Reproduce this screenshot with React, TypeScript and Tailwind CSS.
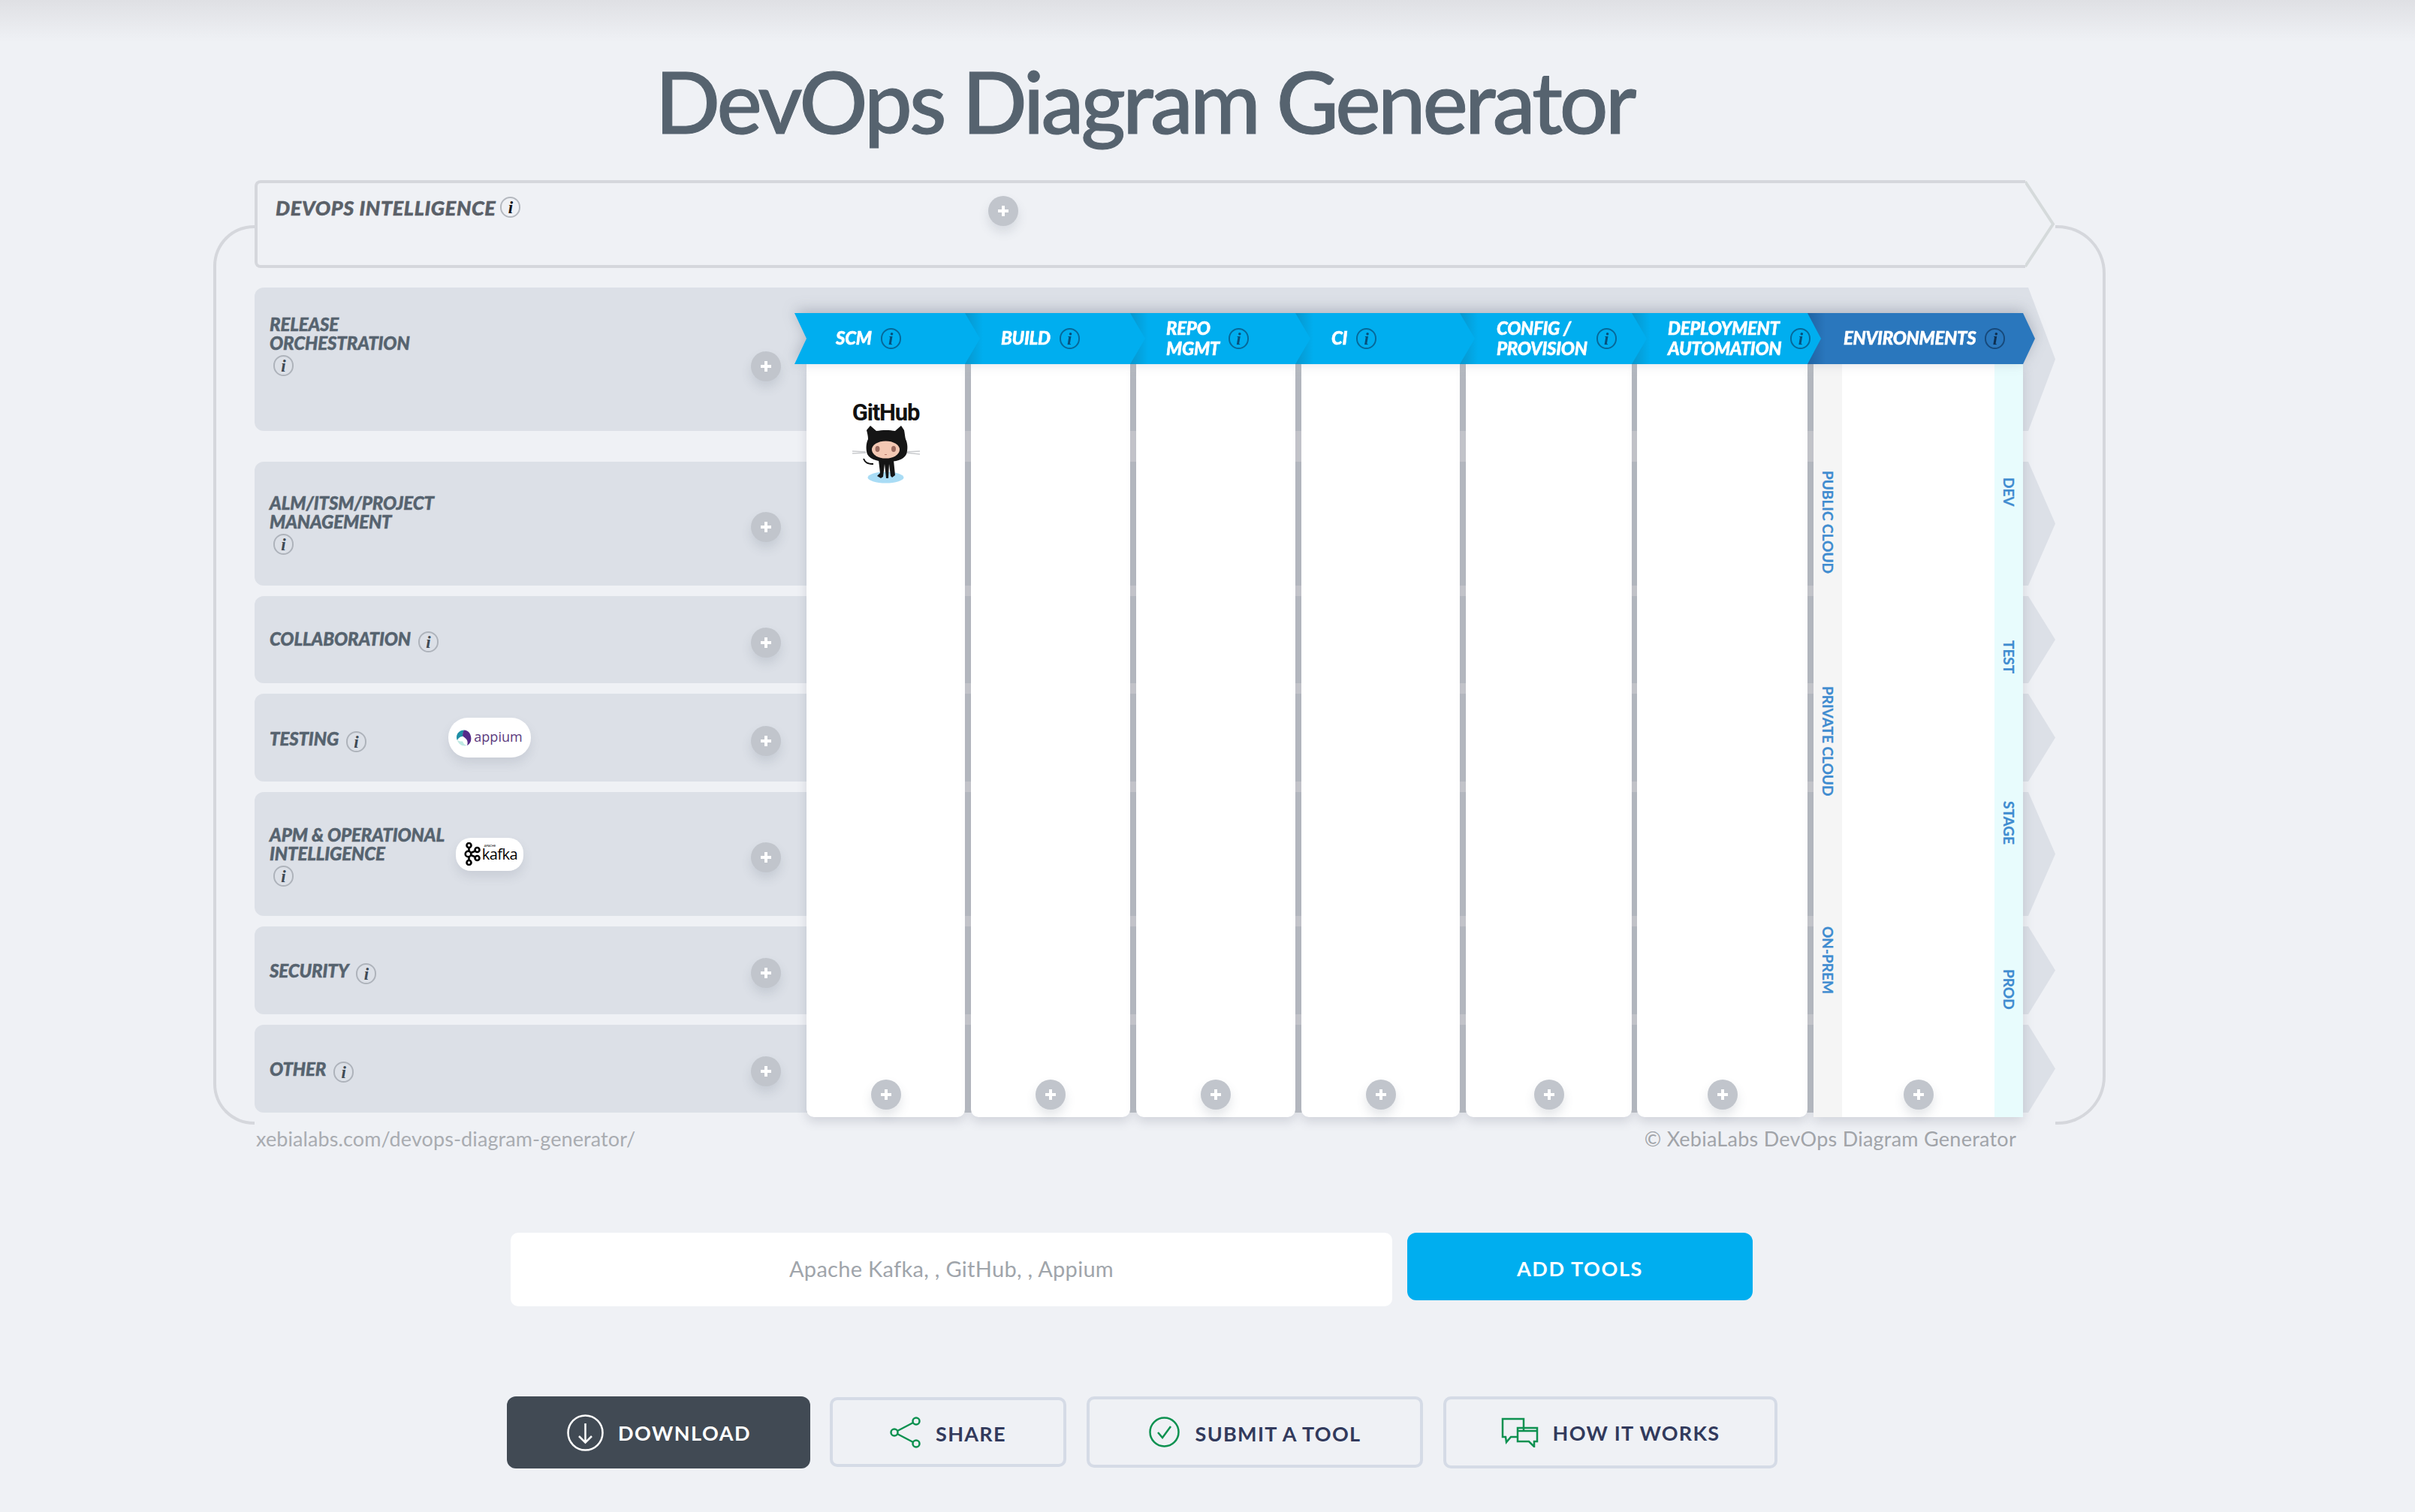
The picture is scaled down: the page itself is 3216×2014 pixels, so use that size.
import React from "react";

const InfoIcon = ({ tone = "gray", className = "" }: { tone?: "gray" | "blue" | "navy" | "dark"; className?: string }) => {
  const tones = {
    gray: "border-[#aeb3bb] text-[#3f4a54]",
    dark: "border-[#b4b8bf] text-[#0f1114]",
    blue: "border-[#06699a] text-[#06507c]",
    navy: "border-[#174a7c] text-[#0e2f50]",
  };
  return (
    <span
      className={`inline-flex h-[28px] w-[27px] shrink-0 items-center justify-center rounded-full border-2 [font-family:'Liberation_Serif',serif] text-[23px] font-bold italic leading-none ${tones[tone]} ${className}`}
    >
      i
    </span>
  );
};

const PlusButton = ({ className = "" }: { className?: string }) => (
  <button className={`flex h-[40px] w-[40px] shrink-0 items-center justify-center rounded-full bg-[#c1c5cc] shadow-[0_8px_14px_rgba(90,100,120,0.16)] ${className}`}>
    <svg width="14" height="14" viewBox="0 0 14 14" fill="#ffffff">
      <path d="M5 0h4v5h5v4H9v5H5V9H0V5h5z" />
    </svg>
  </button>
);

const AppiumLogo = () => (
  <div className="flex items-center gap-[3px] text-[#5b3a7e]">
    <svg width="20" height="22" viewBox="0 0 20 22">
      <path d="M10 0.500C4 0.500 0 5 0 10c0 1.500 .4 3 1 4 1-3 4-5 7-5 0-3 1-6 2-8.500z" fill="#1f8fa6" />
      <path d="M1 14c1 4 5 7.500 10 7.500 1 0 2-.2 3-.5-3-.5-5-2.500-6-5.500-3 0-5-.5-7-1.500z" fill="#bfe9e3" />
      <path d="M10 0.500c3 .2 5 1 7 3.500 2 3 3 7 2 11-1 3-3 5-5 6 1-3 1-6-1-8.500-2-2.500-5-3-5-5 0-3 1-5.500 2-7z" fill="#54298a" />
    </svg>
    <span className="[font-family:'Open_Sans',sans-serif] text-[18px] leading-none pb-[3px]">appium</span>
  </div>
);

const KafkaLogo = () => (
  <div className="flex items-center gap-[2px] pl-[3px] text-black">
    <svg width="22" height="31" viewBox="0 0 21 31" fill="none" stroke="#000" strokeWidth="2.600">
      <circle cx="6" cy="4" r="3" />
      <circle cx="5" cy="15.500" r="3.800" />
      <circle cx="6" cy="27" r="3" />
      <circle cx="17" cy="10" r="3" />
      <circle cx="17" cy="21" r="3" />
      <path d="M6 7v5M6 19v5M8.500 14l6-2.500M8.500 17l6 2.500" />
    </svg>
    <div className="flex flex-col">
      <span className="text-[4px] leading-[5px] pl-[3px]">APACHE</span>
      <span className="[font-family:'Open_Sans',sans-serif] text-[20px] leading-[18px] tracking-[-0.5px] pb-[4px]">kafka</span>
    </div>
  </div>
);

const Octocat = () => (
  <svg width="90" height="82" viewBox="0 0 90 80">
    <ellipse cx="44.500" cy="69" rx="24" ry="7.500" fill="#a9dcf5" />
    <path d="M0 34l18 1M0 37l18-1M71 35l19-1M71 36l19 2" stroke="#c9cbce" strokeWidth="1.300" />
    <path d="M15 44c2 5 5 7 13 7" stroke="#111" strokeWidth="2" fill="none" />
    <path d="M19 6l5-6 8 7c8-1.500 18-1.500 25 0l8-7 4 6c1 5 1 8 2 12 3 6 3 14 1 20-4 8-15 10-25 10S24 46 20 38c-2-6-2-14 1-20 0-4-1-8-2-12z" fill="#151515" />
    <path d="M35 46h20l2 20-4 3-2-2-2-16-1 19h-3l-2-19-2 17-3 2-5-3 4-4z" fill="#151515" />
    <ellipse cx="44.500" cy="32" rx="18.500" ry="11.500" fill="#f3c8b3" />
    <ellipse cx="33.500" cy="31" rx="3" ry="4" fill="#9a6a5e" />
    <ellipse cx="55" cy="31" rx="3" ry="4" fill="#9a6a5e" />
    <path d="M43 38.500h3" stroke="#b8796a" strokeWidth="1" />
  </svg>
);

const rows = [
  { lines: ["RELEASE", "ORCHESTRATION"], h: "h-[191px]", labelPad: "pt-[37px]", plusPad: "pt-[19px]", stacked: true },
  { lines: ["ALM/ITSM/PROJECT", "MANAGEMENT"], h: "h-[165px]", labelPad: "pt-[43px]", plusPad: "pt-[8px]", stacked: true },
  { lines: ["COLLABORATION"], h: "h-[116px]", labelPad: "pt-[45px]", plusPad: "pt-[7px]", stacked: false },
  { lines: ["TESTING"], h: "h-[117px]", labelPad: "pt-[48px]", plusPad: "pt-[8px]", stacked: false, logo: "appium" },
  { lines: ["APM & OPERATIONAL", "INTELLIGENCE"], h: "h-[165px]", labelPad: "pt-[45px]", plusPad: "pt-[8px]", stacked: true, logo: "kafka" },
  { lines: ["SECURITY"], h: "h-[117px]", labelPad: "pt-[47px]", plusPad: "pt-[7px]", stacked: false },
  { lines: ["OTHER"], h: "h-[117px]", labelPad: "pt-[47px]", plusPad: "pt-[7px]", stacked: false },
];

const columns = [
  { title: ["SCM"], head: "w-[247px] -mr-[20px] z-[7] pl-[55px] bg-[#00aeef] [clip-path:polygon(0_0,calc(100%_-_20px)_0,100%_50%,calc(100%_-_20px)_100%,0_100%,16px_50%)]", body: "w-[211px]" },
  { title: ["BUILD"], head: "w-[240px] -mr-[20px] z-[6] pl-[48px] bg-[linear-gradient(90deg,#0796cd,#00aeef_24px)] [clip-path:polygon(0_0,calc(100%_-_20px)_0,100%_50%,calc(100%_-_20px)_100%,0_100%)]", body: "w-[212px]" },
  { title: ["REPO", "MGMT"], head: "w-[240px] -mr-[20px] z-[5] pl-[48px] bg-[linear-gradient(90deg,#0796cd,#00aeef_24px)] [clip-path:polygon(0_0,calc(100%_-_20px)_0,100%_50%,calc(100%_-_20px)_100%,0_100%)]", body: "w-[212px]" },
  { title: ["CI"], head: "w-[239px] -mr-[20px] z-[4] pl-[48px] bg-[linear-gradient(90deg,#0796cd,#00aeef_24px)] [clip-path:polygon(0_0,calc(100%_-_20px)_0,100%_50%,calc(100%_-_20px)_100%,0_100%)]", body: "w-[211px]" },
  { title: ["CONFIG /", "PROVISION"], head: "w-[249px] -mr-[20px] z-[3] pl-[49px] bg-[linear-gradient(90deg,#0796cd,#00aeef_24px)] [clip-path:polygon(0_0,calc(100%_-_20px)_0,100%_50%,calc(100%_-_20px)_100%,0_100%)]", body: "w-[221px]" },
  { title: ["DEPLOYMENT", "AUTOMATION"], head: "w-[252px] -mr-[18px] z-[2] pl-[48px] bg-[linear-gradient(90deg,#0796cd,#00aeef_24px)] [clip-path:polygon(0_0,calc(100%_-_18px)_0,100%_50%,calc(100%_-_18px)_100%,0_100%)]", body: "w-[227px]" },
];

const leftStrip = [
  { text: "PUBLIC CLOUD", mt: "mt-[142px]" },
  { text: "PRIVATE CLOUD", mt: "mt-[150px]" },
  { text: "ON-PREM", mt: "mt-[174px]" },
];

const rightStrip = [
  { text: "DEV", mt: "mt-[151px]" },
  { text: "TEST", mt: "mt-[178px]" },
  { text: "STAGE", mt: "mt-[170px]" },
  { text: "PROD", mt: "mt-[166px]" },
];

const labelText = "font-black italic text-[24px] leading-[24.500px] tracking-[-0.1px] text-[#56636f] [-webkit-text-stroke:0.5px_#56636f]";
const headText = "font-black italic text-[24px] leading-[27px] tracking-[-0.3px] text-white [-webkit-text-stroke:0.5px_#ffffff]";
const stripText = "[writing-mode:vertical-rl] font-bold text-[19px] leading-none text-[#3f8cd0] [-webkit-text-stroke:0.3px_#3f8cd0]";
const outlineBtn = "flex items-center justify-center rounded-[10px] border-4 border-[#d5dbe6] font-bold text-[27px] tracking-[1.300px] text-[#323a5c]";

export default function App() {
  return (
    <div className="min-h-[2014px] w-full overflow-hidden bg-[linear-gradient(#dfe0e4,#eff1f5_56px)] [font-family:Lato,sans-serif]">
      <h1 className="pt-[64px] pr-[168px] text-center text-[114px] font-medium leading-[140px] tracking-[-4px] text-[#56636f] [-webkit-text-stroke:1px_#56636f]">
        DevOps Diagram Generator
      </h1>

      <div className="relative ml-[339px] mt-[36px] w-[2398px]">
        {/* outer bracket */}
        <div className="absolute left-[-55px] top-[60px] h-[1198px] w-[55px] rounded-l-[54px] border-y-4 border-l-4 border-[#d5d7dc]" />
        <div className="absolute right-[-67px] top-[60px] h-[1198px] w-[67px] rounded-r-[64px] border-y-4 border-r-4 border-[#d5d7dc]" />

        {/* devops intelligence */}
        <div className="relative flex h-[117px]">
          <div className="flex flex-1 rounded-l-[8px] border-y-4 border-l-4 border-[#d5d7dc] pl-[24px] pt-[18px]">
            <div className="flex w-[949px]">
              <span className="font-black italic text-[27px] leading-[30px] tracking-[0.65px] text-[#5a6068] [-webkit-text-stroke:0.5px_#5a6068]">DEVOPS INTELLIGENCE</span>
              <InfoIcon tone="dark" className="ml-[6px]" />
            </div>
            <PlusButton className="-mt-[1px]" />
          </div>
          <svg width="40" height="117" viewBox="0 0 40 117" fill="none" className="shrink-0">
            <path d="M0 2l37 56.500L0 115" stroke="#d5dadb" strokeWidth="4" />
          </svg>
        </div>

        {/* rows + columns */}
        <div className="relative mt-[26px] w-[2398px]">
          <div className="flex flex-col gap-[14px]">
            {rows.map((row, i) => (
              <div key={i} className={`flex ${row.h} ${i === 0 ? "mb-[27px]" : ""}`}>
                <div className="flex flex-1 rounded-l-[12px] bg-[#dce0e7]">
                  <div className={`w-[258px] pl-[20px] ${row.labelPad}`}>
                    <div className={row.stacked ? "" : "flex"}>
                      <div className={labelText}>
                        {row.lines.map(line => (
                          <div key={line} className="whitespace-nowrap">{line}</div>
                        ))}
                      </div>
                      <InfoIcon className={row.stacked ? "ml-[5px] mt-[4px]" : "ml-[10px] mt-[2px]"} />
                    </div>
                  </div>
                  <div className="flex w-[110px] items-center justify-center">
                    {row.logo === "appium" && (
                      <div className="flex h-[53px] w-[110px] items-center justify-center rounded-[26px] bg-white shadow-[0_8px_14px_rgba(90,100,120,0.14)]">
                        <AppiumLogo />
                      </div>
                    )}
                    {row.logo === "kafka" && (
                      <div className="flex h-[44px] w-[90px] items-center justify-center rounded-[20px] bg-white shadow-[0_8px_14px_rgba(90,100,120,0.14)]">
                        <KafkaLogo />
                      </div>
                    )}
                  </div>
                  <div className={`ml-[293px] flex items-center ${row.plusPad}`}>
                    <PlusButton />
                  </div>
                </div>
                <div className="w-[36px] shrink-0 bg-[#dce0e7] [clip-path:polygon(0_0,100%_50%,0_100%)]" />
              </div>
            ))}
          </div>

          {/* tool columns lying over the rows */}
          <div className="absolute left-[719px] top-[34px] flex h-[1071px] w-[1652px] flex-col">
            <div className="relative z-10 flex h-[68px] [filter:drop-shadow(0_-4px_9px_rgba(60,70,90,0.28))]">
              {columns.map(col => (
                <div key={col.title[0]} className={`relative flex h-[68px] items-center ${col.head}`}>
                  <div className={`${headText} -mt-[3px]`}>
                    {col.title.map(line => (
                      <div key={line} className="whitespace-nowrap">{line}</div>
                    ))}
                  </div>
                  <InfoIcon tone="blue" className="ml-[12px]" />
                </div>
              ))}
              <div className="relative z-[1] flex h-[68px] w-[303px] items-center bg-[linear-gradient(90deg,#1f63a3,#2a77bd_24px)] pl-[48px] [clip-path:polygon(0_0,calc(100%_-_16px)_0,100%_50%,calc(100%_-_16px)_100%,0_100%)]">
                <span className={`${headText} -mt-[3px]`}>ENVIRONMENTS</span>
                <InfoIcon tone="navy" className="ml-[12px]" />
              </div>
            </div>

            <div className="relative ml-[16px] flex h-[1003px] w-[1620px] gap-[8px]">
              <div className="absolute inset-x-0 bottom-[6px] top-0 bg-black/13" />
              {columns.map((col, i) => (
                <div key={col.title[0]} className={`relative flex flex-col items-center rounded-b-[10px] bg-white pb-[10px] shadow-[0_6px_14px_rgba(70,80,100,0.18)] ${col.body} ${i === 4 ? "-mr-[1px]" : ""}`}>
                  {i === 0 && (
                    <div className="flex flex-col items-center pt-[49px]">
                      <span className="[font-family:Roboto,sans-serif] text-[31px] font-bold leading-[32px] tracking-[-1.200px] text-[#111]">GitHub</span>
                      <Octocat />
                    </div>
                  )}
                  <PlusButton className="mt-auto" />
                </div>
              ))}
              <div className="relative flex w-[279px] shadow-[0_6px_14px_rgba(70,80,100,0.18)]">
                <div className="flex w-[38px] flex-col items-center bg-[#f5f5f5]">
                  {leftStrip.map(item => (
                    <span key={item.text} className={`${stripText} ${item.mt}`}>{item.text}</span>
                  ))}
                </div>
                <div className="flex flex-1 flex-col items-center justify-end bg-white pb-[10px]">
                  <PlusButton />
                </div>
                <div className="flex w-[38px] flex-col items-center bg-[#e8fcfd]">
                  {rightStrip.map(item => (
                    <span key={item.text} className={`${stripText} ${item.mt}`}>{item.text}</span>
                  ))}
                </div>
              </div>
            </div>
          </div>
        </div>

        <div className="mt-[17px] flex w-[2346px] justify-between pl-[2px] text-[27px] leading-[36px]">
          <span className="tracking-[0.1px] text-[#a9acb1]">xebialabs.com/devops-diagram-generator/</span>
          <span className="tracking-[0.25px] text-[#a1a4a9]">© XebiaLabs DevOps Diagram Generator</span>
        </div>
      </div>

      <div className="ml-[680px] mt-[107px] flex items-start gap-[20px]">
        <div className="flex h-[98px] w-[1174px] items-center justify-center rounded-[10px] bg-white pb-[2px] text-[29px] tracking-[0.3px] text-[#a0a5ab]">
          Apache Kafka, , GitHub, , Appium
        </div>
        <button className="h-[90px] w-[460px] rounded-[12px] bg-[#00aeef] pt-[6px] text-[27px] font-bold tracking-[1.600px] text-white">
          ADD TOOLS
        </button>
      </div>

      <div className="ml-[675px] mt-[120px] flex items-start">
        <button className="flex h-[96px] w-[404px] items-center rounded-[12px] bg-[#414a54] pl-[80px] text-[27px] font-bold tracking-[1.500px] text-white">
          <svg width="49" height="49" viewBox="0 0 49 49" fill="none" stroke="#fff" strokeWidth="2.500" className="mr-[19px]">
            <circle cx="24.500" cy="24.500" r="23" />
            <path d="M24.500 12v25M16 29l8.500 8.500L33 29" />
          </svg>
          <span className="pt-[2px]">DOWNLOAD</span>
        </button>
        <button className={`${outlineBtn} ml-[26px] mt-[1px] h-[93px] w-[315px]`}>
          <svg width="42" height="42" viewBox="0 0 42 42" fill="none" stroke="#0d9150" strokeWidth="2.500" className="mr-[19px]">
            <circle cx="6" cy="21" r="4.500" />
            <circle cx="35" cy="6" r="4.500" />
            <circle cx="35" cy="36" r="4.500" />
            <path d="M10 19l21-11M10 23l21 11" />
          </svg>
          <span className="pt-[6px]">SHARE</span>
        </button>
        <button className={`${outlineBtn} ml-[27px] h-[95px] w-[448px]`}>
          <svg width="41" height="41" viewBox="0 0 41 41" fill="none" stroke="#0d9150" strokeWidth="2.500" className="mr-[21px]">
            <circle cx="20.500" cy="20.500" r="19" />
            <path d="M12 21l6 7 11-15" />
          </svg>
          <span className="pt-[6px]">SUBMIT A TOOL</span>
        </button>
        <button className={`${outlineBtn} ml-[27px] h-[96px] w-[445px]`}>
          <svg width="50" height="40" viewBox="0 0 50 40" fill="none" stroke="#0d9150" strokeWidth="2.500" className="mr-[19px]">
            <path d="M30 18V2H2v24h4l1 7 6-7h9" />
            <path d="M22 14h26v18h-4v7l-7-7H22z" />
            <path d="M22 18h26" />
          </svg>
          <span className="pt-[2px]">HOW IT WORKS</span>
        </button>
      </div>
    </div>
  );
}
